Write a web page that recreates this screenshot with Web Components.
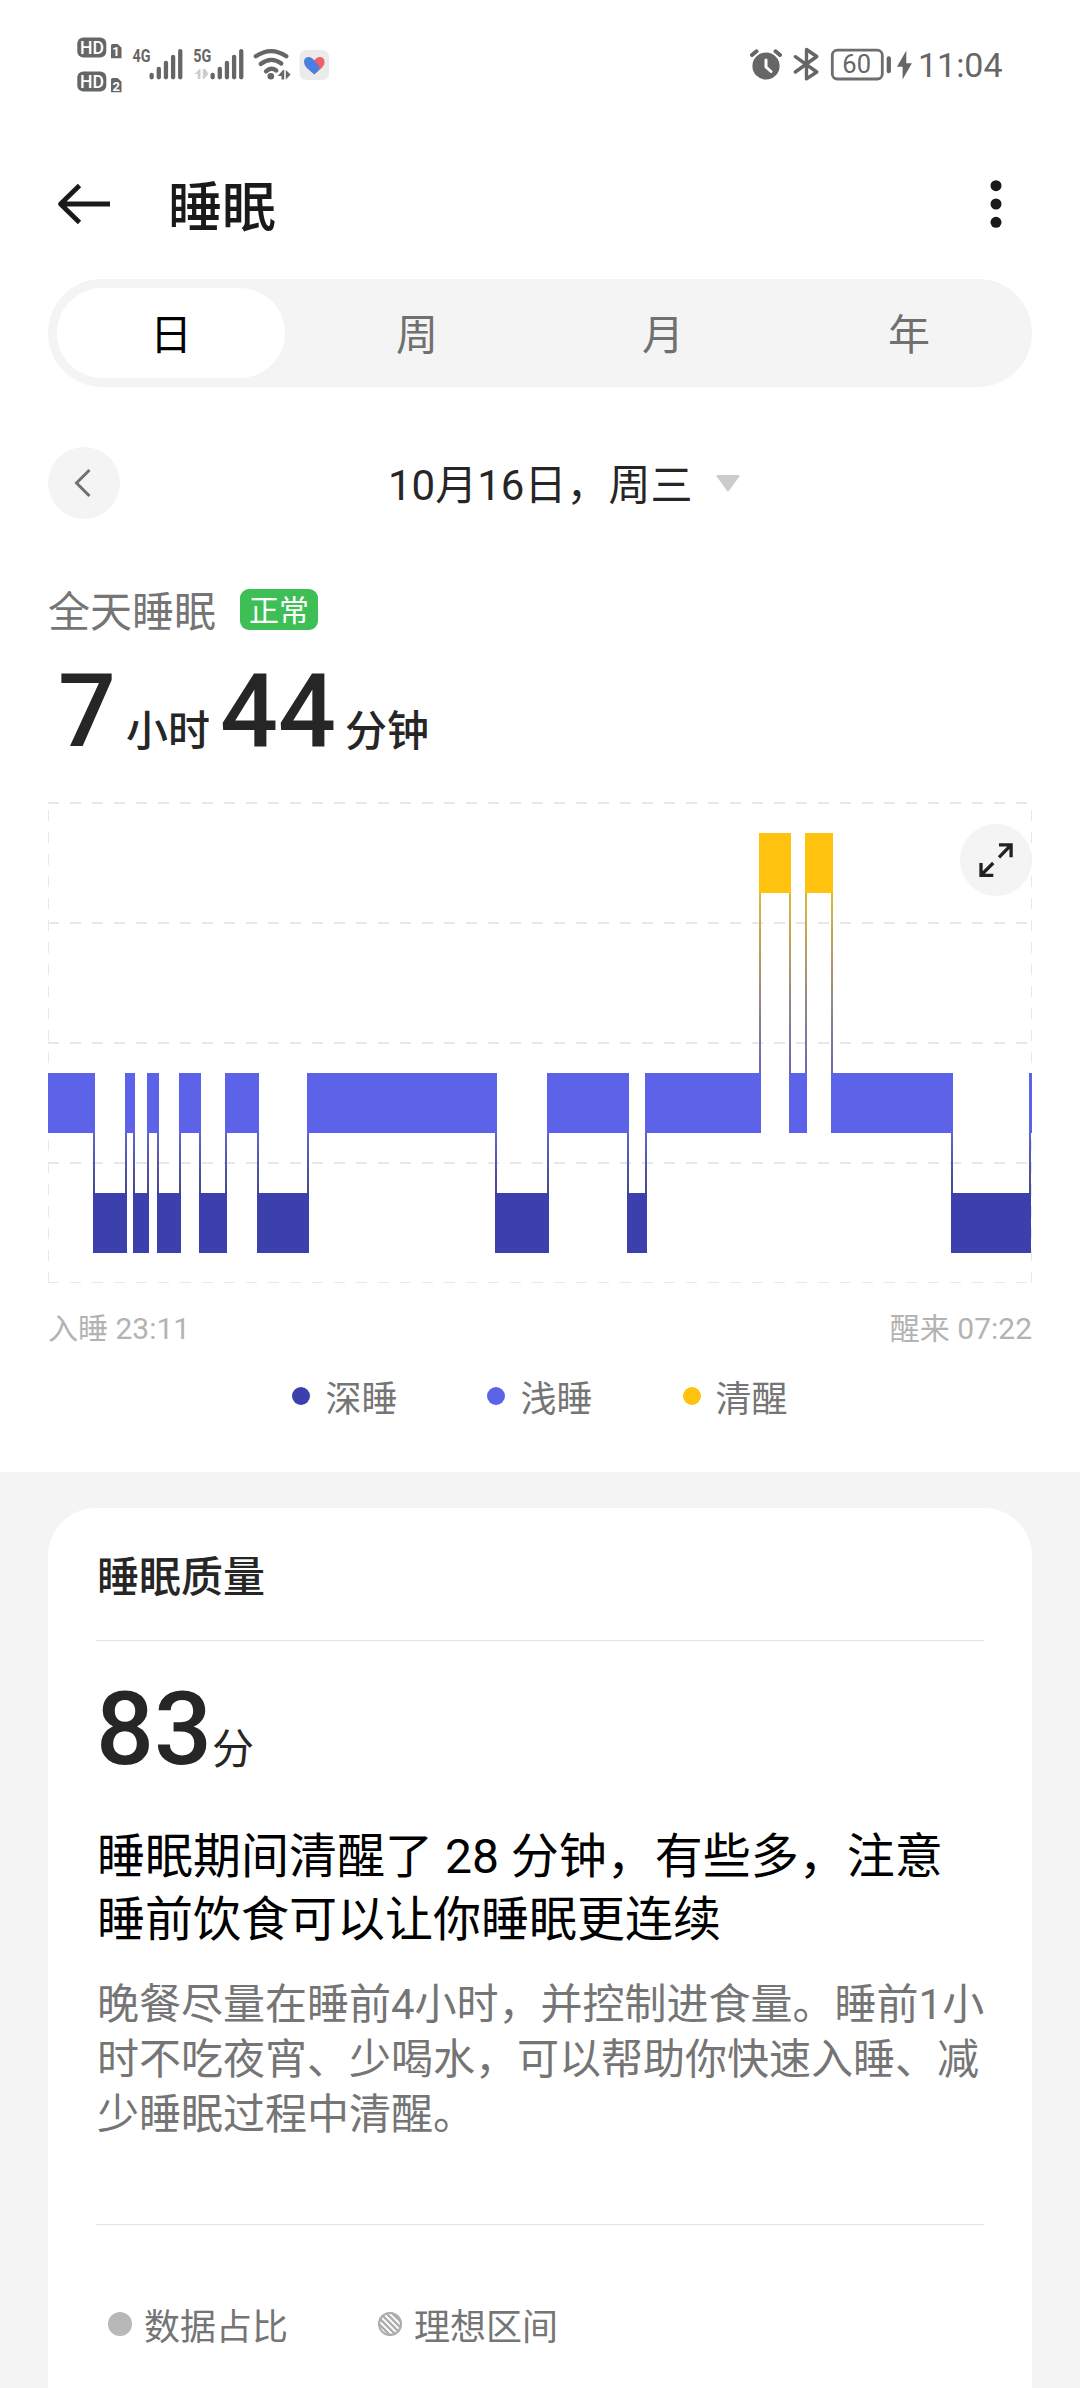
<!DOCTYPE html>
<html lang="zh-CN">
<head>
<meta charset="utf-8">
<meta name="viewport" content="width=device-width">
<title>睡眠</title>
<style>
html,body{margin:0;padding:0;background:#f4f4f4}
body{width:1080px;height:2388px;overflow:hidden;font-family:Roboto,"Noto Sans CJK SC",sans-serif;color:#262626}
</style>
</head>
<body>
<sleep-page></sleep-page>
<script>
const define = (name, html, setup) => {
  const tpl = document.createElement('template');
  tpl.innerHTML = html;
  customElements.define(name, class extends HTMLElement {
    constructor() {
      super();
      this.attachShadow({mode: 'open'}).appendChild(tpl.content.cloneNode(true));
    }
    connectedCallback() { if (setup) setup(this, this.shadowRoot); }
  });
};

/* ---------- status bar ---------- */
const bars = x => [72.7, 66.7, 60.7, 54.7, 49].map((top, i) =>
  `<rect x="${x + i * 7.15}" y="${top}" width="4.3" height="${79.4 - top}" rx="2.1"/>`).join('');

define('status-bar', `
<style>
:host{display:flex;justify-content:space-between;height:130px;box-sizing:border-box;padding:20px 60px 0}
svg{display:block;height:90px}
text{font-family:Roboto,sans-serif}
</style>
<svg viewBox="60 20 290 90" width="290" fill="#666">
  <rect x="77.3" y="37.6" width="29" height="19.8" rx="6"/>
  <rect x="77.3" y="71.6" width="29" height="19.8" rx="6"/>
  <g fill="#fff" font-size="18" font-weight="500">
    <text x="80" y="54" textLength="24" lengthAdjust="spacingAndGlyphs">HD</text>
    <text x="80" y="88" textLength="24" lengthAdjust="spacingAndGlyphs">HD</text>
  </g>
  <path d="M112.500 44h5.200l3.800 3.800v10.500h-10.500v-12.800q0-1.500 1.500-1.500z"/>
  <path d="M112.500 78h5.200l3.800 3.800v10.500h-10.500v-12.800q0-1.500 1.500-1.500z"/>
  <g fill="#fff" font-size="13" font-weight="700">
    <text x="112.300" y="56.300">1</text>
    <text x="112.500" y="90.500">2</text>
  </g>
  <g font-size="18.500" font-weight="700">
    <text x="132.500" y="62.300" textLength="18" lengthAdjust="spacingAndGlyphs">4G</text>
    <text x="193.300" y="62.300" textLength="18" lengthAdjust="spacingAndGlyphs">5G</text>
  </g>
  ${bars(149.5)}
  ${bars(210.5)}
  <path fill="#ccc" d="M194 74.500l5.500-5.500h1v10h-2.800v-5.500zM202.800 69h2.400l3.300 5-4 4.500-1.700 .8z"/>
  <g fill="none" stroke="#666" stroke-width="4.300" stroke-linecap="round">
    <path d="M255.800 56.300Q271 46 286.300 56.300"/>
    <path d="M260.700 64Q271 56 281.300 63.500"/>
    <path d="M266 71.300Q271 66.800 276.300 70.500"/>
  </g>
  <circle cx="270.800" cy="76.300" r="3.300"/>
  <path d="M277.800 76l5.200-6h1.200v9.500h-2.700v-3.500zM285.800 70l4.800 4.500-4.800 5z"/>
  <rect x="299.500" y="50" width="29.500" height="30" rx="6.500" fill="#ebebeb"/>
  <path fill="#f0606a" d="M314 60.500q3-4 6.500-3.500 4 .8 4 5 0 3.500-4 7l-6.500 5.500z"/>
  <path fill="#4a7fe0" d="M314.300 74.500l-7.300-6.300q-3-2.900-3-6.200 0-4.600 4.200-5 3.600-.2 6.100 3.500l4.700 5.700q1.500 2.300-.3 4z"/>
</svg>
<svg viewBox="730 20 290 90" width="290" fill="#666">
  <circle cx="766" cy="66" r="13.600"/>
  <g fill="none" stroke="#666" stroke-width="4" stroke-linecap="round">
    <path d="M752 55l4.500-3.700M780 55l-4.500-3.700"/>
  </g>
  <path d="M766 60v7l5 4.500" fill="none" stroke="#fff" stroke-width="3" stroke-linecap="round" stroke-linejoin="round"/>
  <path d="M795.300 56.700l21.500 15.300-10.300 6.800v-29.300l10.300 7-21.500 15.500" fill="none" stroke="#666" stroke-width="3.400" stroke-linejoin="round" stroke-linecap="round"/>
  <rect x="832.300" y="50.200" width="50" height="28.800" rx="5" fill="none" stroke="#6e6e6e" stroke-width="2.800"/>
  <rect x="886.700" y="56.300" width="4.200" height="17" rx="2"/>
  <text x="842.300" y="73" font-size="25.500">60</text>
  <path d="M906.300 50.500l-9.300 16.200h5.600v12.800l9.300-16.300h-5.600z"/>
  <text x="918" y="76.800" font-size="34" textLength="84.500">11:04</text>
</svg>`);

/* ---------- title bar ---------- */
define('app-header', `
<style>
:host{display:flex;align-items:center;height:149px;box-sizing:border-box;padding:0 72px 1px 56px}
svg{display:block}
h1{flex:1;margin:9px 0 0 56px;font-size:54px;line-height:80px;font-weight:500;color:#1a1a1a}
</style>
<svg width="56" height="44" viewBox="0 0 56 44" fill="none" stroke="#1a1a1a" stroke-width="4.800">
  <path d="M54 22H5M23.500 3.500L4.500 22l19 18.500" stroke-linejoin="round"/>
</svg>
<h1><slot></slot></h1>
<svg width="24" height="48" viewBox="0 0 24 48" fill="#1a1a1a">
  <circle cx="12" cy="5.700" r="5.500"/><circle cx="12" cy="24" r="5.500"/><circle cx="12" cy="42.300" r="5.500"/>
</svg>`);

/* ---------- period tabs ---------- */
define('period-tab', `
<style>
:host{flex:1;display:flex;padding:9px;font-size:42px;line-height:60px;color:#707070}
div{flex:1;display:flex;align-items:center;justify-content:center;border-radius:45px;padding-top:5px}
:host([selected]) div{background:#fff;color:#000}
</style><div><slot></slot></div>`);
define('period-tabs', `
<style>:host{display:flex;height:108px;margin:0 48px;border-radius:54px;background:#f4f4f4}</style><slot></slot>`);

/* ---------- date picker row ---------- */
define('date-row', `
<style>
:host{display:flex;align-items:center;height:72px;margin:60px 48px 0}
.prev{width:72px;height:72px;border-radius:50%;background:#f4f4f4}
.date{display:flex;flex:1;align-items:center;justify-content:center;gap:24px;padding-right:24px;font-size:42px;line-height:60px}
.date span{padding-top:6px;width:304px;white-space:nowrap}
svg{display:block}
</style>
<svg class="prev" viewBox="0 0 72 72"><path d="M41.500 23L28.500 36l13 13" fill="none" stroke="#707070" stroke-width="3"/></svg>
<div class="date"><span><slot></slot></span>
<svg width="24" height="17" viewBox="0 0 24 17"><path d="M1.500 1h21L12 15.500z" fill="#ccc" stroke="#ccc" stroke-width="2" stroke-linejoin="round"/></svg></div>`);

/* ---------- total sleep ---------- */
define('sleep-total', `
<style>
:host{display:block;margin:61px 48px 0}
.label{display:flex;align-items:center;gap:24px;height:60px;font-size:42px;line-height:60px;color:#757575}
.label span{padding-top:6px}
.badge{box-sizing:border-box;margin:0 0 1px;width:78px;height:41px;border-radius:9px;background:#3dbf55;color:#fff;font-size:30px;line-height:44px;text-align:center}
.value{display:flex;align-items:baseline;height:120px;margin-top:11px;padding-left:10px;font-size:42px;line-height:60px;font-weight:500;white-space:pre}
b{font-size:102px;line-height:120px;font-weight:500}
.h{margin-left:10px}.m{margin-left:10px}.u{margin-left:9px}
</style>
<div class="label"><span>全天睡眠</span><div class="badge">正常</div></div>
<div class="value"><b>7</b><span class="h">小时</span><b class="m">44</b><span class="u">分钟</span></div>`);

/* ---------- hypnogram ---------- */
define('sleep-chart', `
<style>
:host{display:block;position:relative;margin:31px 48px 0;height:481px}
svg{display:block}
.expand{position:absolute;right:0;top:22px;border-radius:50%;background:#f4f4f4}
</style>
<svg class="plot" width="984" height="481" viewBox="48 802 984 481"></svg>
<svg class="expand" width="72" height="72" viewBox="960 824 72 72" fill="none" stroke="#222" stroke-width="3.300">
  <path d="M999 844.900h12.100v12.300M1011 845l-12 12.300M981 863v12.300h12.300M981.200 875l12-12"/>
</svg>`, (el, root) => {
  const stages = [
    ['light',48,95],['deep',93,127],['light',125,135],['deep',133,149],['light',147,159],
    ['deep',157,181],['light',179,201],['deep',199,227],['light',225,259],['deep',257,309],
    ['light',307,497],['deep',495,549],['light',547,629],['deep',627,647],['light',645,761],
    ['awake',759,791],['light',789,807],['awake',805,833],['light',831,953],['deep',951,1031],
    ['light',1029,1032]];
  const top = {awake: 833, light: 1073, deep: 1193};
  const fill = {awake: '#fec20f', light: '#5d63e9', deep: '#3b40ad'};
  let s = `<defs>
    <linearGradient id="al" gradientUnits="userSpaceOnUse" x1="0" x2="0" y1="893" y2="1073"><stop stop-color="#dcb93a"/><stop offset="1" stop-color="#6668b8"/></linearGradient>
    <linearGradient id="ld" gradientUnits="userSpaceOnUse" x1="0" x2="0" y1="1133" y2="1193"><stop stop-color="#6065c8"/><stop offset="1" stop-color="#454890"/></linearGradient></defs>
    <g stroke="#e8e8e8" stroke-width="2" stroke-dasharray="11">`;
  for (const y of [803, 923, 1043, 1163, 1283]) s += `<path d="M48 ${y}H1032"/>`;
  s += '<path d="M48 1283V803M1032 1283V803"/></g>';
  stages.forEach(([k, a, b], i) => {
    s += `<rect x="${a}" y="${top[k]}" width="${b - a}" height="60" fill="${fill[k]}"/>`;
    const next = stages[i + 1];
    if (!next) return;
    const wake = k === 'awake' || next[0] === 'awake';
    s += `<rect x="${next[1]}" y="${wake ? 893 : 1133}" width="2" height="${wake ? 180 : 60}" fill="url(#${wake ? 'al' : 'ld'})"/>`;
  });
  root.querySelector('.plot').innerHTML = s;
});

define('chart-axis', `
<style>:host{display:flex;justify-content:space-between;margin:26px 48px 0;font-size:30px;line-height:40px;color:#b3b3b3}</style>
<slot></slot>`);

define('legend-item', `
<style>
:host{display:flex;align-items:center;gap:var(--legend-gap,15px);font-size:36px;line-height:50px;color:#757575}
svg{display:block;width:var(--dot,18px);height:var(--dot,18px)}
span{padding-top:9px}
</style>
<svg viewBox="0 0 24 24"></svg><span><slot></slot></span>`, (el, root) => {
  const svg = root.querySelector('svg');
  svg.innerHTML = el.hasAttribute('striped')
    ? `<defs><clipPath id="c"><circle cx="12" cy="12" r="12"/></clipPath></defs>
       <g clip-path="url(#c)"><path d="M-4 8l20 20M-4 2l26 26M-4-4l30 30M2-4l26 26M8-4l20 20" transform="translate(.5 -.5)" stroke="#adadad" stroke-width="2.300"/></g>
       <circle cx="12" cy="12" r="11" fill="none" stroke="#adadad" stroke-width="2"/>`
    : `<circle cx="12" cy="12" r="12" fill="${el.getAttribute('color')}"/>`;
});
define('legend-row', `<style>:host{display:flex}</style><slot></slot>`);

/* ---------- quality card ---------- */
define('quality-card', `
<style>
:host{display:block;box-sizing:border-box;margin:36px 48px 0;height:880px;padding:38px 48px 0;background:#fff;border-radius:48px 48px 0 0}
h2{margin:0;padding-left:1px;font-size:42px;line-height:64px;font-weight:500}
hr{margin:0;border:0;height:1px;background:#e2e2e2}
h2+hr{margin-top:30px}
.score{display:flex;align-items:baseline;height:120px;margin-top:28px;font-size:42px;line-height:60px}
b{font-size:102px;line-height:120px;font-weight:500}
.lead{margin:36px 0 0;padding-left:1px;font-size:48px;line-height:63px;color:#000;white-space:nowrap}
.tip{margin:26px 0 82px;padding-left:1px;font-size:42px;line-height:55px;color:#757575;white-space:nowrap}
legend-row{gap:90px;margin-top:69px;padding-left:12px;--dot:24px;--legend-gap:12px}
</style>
<h2>睡眠质量</h2>
<hr>
<div class="score"><b>83</b><span>分</span></div>
<p class="lead">睡眠期间清醒了 28 分钟，有些多，注意<br>睡前饮食可以让你睡眠更连续</p>
<p class="tip">晚餐尽量在睡前4小时，并控制进食量。睡前1小<br>时不吃夜宵、少喝水，可以帮助你快速入睡、减<br>少睡眠过程中清醒。</p>
<hr>
<legend-row>
  <legend-item color="#b8b8b8">数据占比</legend-item>
  <legend-item striped>理想区间</legend-item>
</legend-row>`);

/* ---------- page ---------- */
define('sleep-page', `
<style>
:host{display:block}
main{box-sizing:border-box;height:1472px;background:#fff}
.stages{justify-content:center;gap:90px;margin-top:17px}
</style>
<main>
  <status-bar></status-bar>
  <app-header>睡眠</app-header>
  <period-tabs>
    <period-tab selected>日</period-tab><period-tab>周</period-tab><period-tab>月</period-tab><period-tab>年</period-tab>
  </period-tabs>
  <date-row>10月16日，周三</date-row>
  <sleep-total></sleep-total>
  <sleep-chart></sleep-chart>
  <chart-axis><span>入睡 23:11</span><span>醒来 07:22</span></chart-axis>
  <legend-row class="stages">
    <legend-item color="#3b40ad">深睡</legend-item>
    <legend-item color="#5d63e9">浅睡</legend-item>
    <legend-item color="#fec20f">清醒</legend-item>
  </legend-row>
</main>
<quality-card></quality-card>`);
</script>
</body>
</html>
